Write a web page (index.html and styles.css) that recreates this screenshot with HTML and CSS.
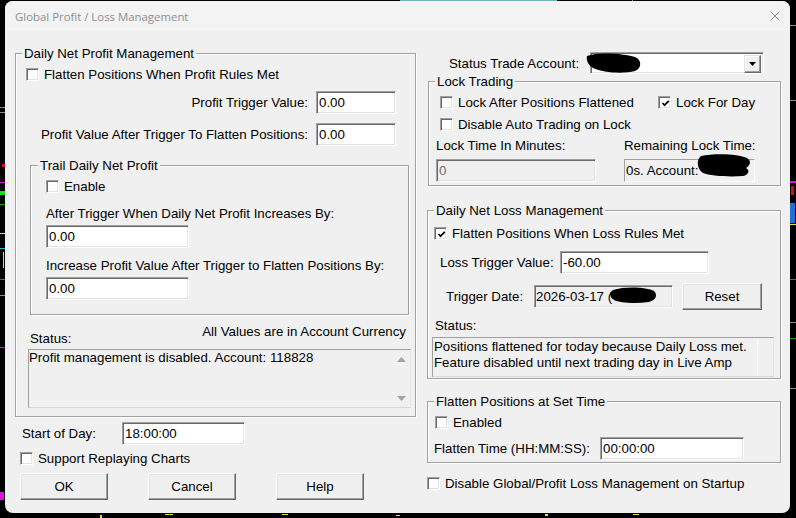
FILE: index.html
```html
<!DOCTYPE html>
<html>
<head>
<meta charset="utf-8">
<link rel="stylesheet" href="styles.css">
</head>
<body>
<div class="chart">
  <span class="c-gray" style="left:0;top:107px;width:5px;height:1px"></span>
  <span class="c-gray" style="left:0;top:112px;width:5px;height:1px"></span>
  <span class="c-red" style="left:2px;top:164px;width:3px;height:3px"></span>
  <span class="c-mag" style="left:0;top:182px;width:5px;height:1px"></span>
  <span class="c-green" style="left:0;top:191px;width:5px;height:4px"></span>
  <span class="c-dgreen" style="left:0;top:204px;width:5px;height:1px"></span>
  <span class="c-yellow" style="left:0;top:233px;width:5px;height:1px"></span>
  <span class="c-cyan" style="left:0;top:248px;width:5px;height:1px"></span>
  <span class="c-yellow" style="left:3px;top:252px;width:1px;height:16px"></span>
  <span class="c-dgreen" style="left:0;top:279px;width:5px;height:1px"></span>
  <span class="c-gray" style="left:0;top:295px;width:5px;height:1px"></span>
  <span class="c-dgreen" style="left:0;top:347px;width:5px;height:1px"></span>
  <span class="c-mag" style="left:0;top:492px;width:4px;height:8px"></span>
  <span class="c-gray" style="left:790px;top:25px;width:6px;height:1px"></span>
  <span class="c-gray" style="left:790px;top:100px;width:6px;height:1px"></span>
  <span class="c-mag" style="left:790px;top:181px;width:6px;height:2px"></span>
  <span class="c-red" style="left:791px;top:186px;width:3px;height:9px"></span>
  <span class="c-blue" style="left:790px;top:203px;width:5px;height:20px"></span>
  <span class="c-yellow" style="left:790px;top:224px;width:6px;height:1px"></span>
  <span class="c-dgreen" style="left:790px;top:279px;width:6px;height:1px"></span>
  <span class="c-gray" style="left:790px;top:322px;width:6px;height:1px"></span>
  <span class="c-dgreen" style="left:790px;top:338px;width:6px;height:1px"></span>
  <span class="c-gray" style="left:790px;top:388px;width:6px;height:1px"></span>
  <span class="c-teal" style="left:400px;top:0;width:157px;height:1px"></span>
  <span class="c-gray" style="left:632px;top:0;width:1px;height:1px"></span>
  <span class="c-yellow" style="left:100px;top:515px;width:2px;height:3px"></span>
  <span class="c-yellow" style="left:165px;top:514px;width:8px;height:1px"></span>
  <span class="c-yellow" style="left:282px;top:514px;width:6px;height:1px"></span>
  <span class="c-yellow" style="left:396px;top:515px;width:4px;height:1px"></span>
  <span class="c-yellow" style="left:545px;top:514px;width:3px;height:2px"></span>
  <span class="c-yellow" style="left:633px;top:514px;width:6px;height:1px"></span>
</div>

<div class="window">
  <div class="titlebar">
    <span class="title">Global Profit / Loss Management</span>
    <svg class="close" width="10" height="10" viewBox="0 0 10 10"><path d="M0.5 0.5 L9.5 9.5 M9.5 0.5 L0.5 9.5" stroke="#8a8a8a" stroke-width="1" fill="none"/></svg>
  </div>

  <div class="body">
    <!-- LEFT COLUMN -->
    <div class="col col-left">
      <fieldset class="group g-profit">
        <legend>Daily Net Profit Management</legend>
        <label class="check"><span class="cb"></span>Flatten Positions When Profit Rules Met</label>
        <div class="frow">
          <span class="flabel">Profit Trigger Value:</span>
          <span class="input w80">0.00</span>
        </div>
        <div class="frow">
          <span class="flabel">Profit Value After Trigger To Flatten Positions:</span>
          <span class="input w80">0.00</span>
        </div>

        <fieldset class="group g-trail">
          <legend>Trail Daily Net Profit</legend>
          <label class="check"><span class="cb"></span>Enable</label>
          <div class="tlabel">After Trigger When Daily Net Profit Increases By:</div>
          <div class="input w143 tinput">0.00</div>
          <div class="tlabel t2">Increase Profit Value After Trigger to Flatten Positions By:</div>
          <div class="input w143 tinput">0.00</div>
        </fieldset>

        <div class="status-head">
          <span class="st-label">Status:</span>
          <span class="st-note">All Values are in Account Currency</span>
        </div>
        <div class="statusbox sb-profit">
          <div class="sb-text">Profit management is disabled. Account: 118828</div>
          <div class="vscroll">
            <svg width="9" height="5" viewBox="0 0 9 5"><path d="M4.5 0 L9 5 L0 5 Z" fill="#a3a3a3"/></svg>
            <svg width="9" height="5" viewBox="0 0 9 5"><path d="M0 0 L9 0 L4.5 5 Z" fill="#a3a3a3"/></svg>
          </div>
        </div>
      </fieldset>

      <div class="sod">
        <span class="sod-label">Start of Day:</span>
        <span class="input w123">18:00:00</span>
      </div>
      <label class="check replay"><span class="cb"></span>Support Replaying Charts</label>
      <div class="buttons">
        <span class="btn">OK</span>
        <span class="btn">Cancel</span>
        <span class="btn">Help</span>
      </div>
    </div>

    <!-- RIGHT COLUMN -->
    <div class="col col-right">
      <div class="acct">
        <span class="acct-label">Status Trade Account:</span>
        <span class="combo">
          <span class="combo-btn"><svg width="7" height="4" viewBox="0 0 7 4"><path d="M0 0 L7 0 L3.5 4 Z" fill="#000"/></svg></span>
          <svg class="blot" width="1" height="1"><path d="M-2 3 C8 -1 33 0 46 4 C53 7 53 15 46 18 C35 21 14 20 4 15 C-1 12 -3 7 -2 3 Z" fill="#000"/></svg>
        </span>
      </div>

      <fieldset class="group g-lock">
        <legend>Lock Trading</legend>
        <div class="lrow">
          <label class="check lock-a"><span class="cb"></span>Lock After Positions Flattened</label>
          <label class="check"><span class="cb checked"><svg width="9" height="9" viewBox="0 0 9 9"><path d="M1.5 4 L3.5 6.2 L7.8 1.8" stroke="#000" stroke-width="1.7" fill="none"/></svg></span>Lock For Day</label>
        </div>
        <label class="check lrow2"><span class="cb"></span>Disable Auto Trading on Lock</label>
        <div class="llabels">
          <span class="ll1">Lock Time In Minutes:</span>
          <span>Remaining Lock Time:</span>
        </div>
        <div class="linputs">
          <span class="input disabled w160">0</span>
          <span class="rembox">0s. Account:
            <svg class="blot" width="1" height="1"><path d="M76 -4 C90 -7 114 -6 122 -2 C127 1 125 6 121 8 C125 10 124 15 118 16 C104 17 85 16 78 13 C72 9 71 0 76 -4 Z" fill="#000"/></svg>
          </span>
        </div>
      </fieldset>

      <fieldset class="group g-loss">
        <legend>Daily Net Loss Management</legend>
        <label class="check"><span class="cb checked"><svg width="9" height="9" viewBox="0 0 9 9"><path d="M1.5 4 L3.5 6.2 L7.8 1.8" stroke="#000" stroke-width="1.7" fill="none"/></svg></span>Flatten Positions When Loss Rules Met</label>
        <div class="losrow">
          <span class="los-label">Loss Trigger Value:</span>
          <span class="input w149">-60.00</span>
        </div>
        <div class="daterow">
          <span class="date-label">Trigger Date:</span>
          <span class="input ro w139">2026-03-17 (
            <svg class="blot" width="1" height="1"><path d="M78 4 C90 0 112 1 119 5 C123 9 121 14 114 16 C100 18 85 17 79 14 C74 11 74 6 78 4 Z" fill="#000"/></svg>
          </span>
          <span class="btn reset">Reset</span>
        </div>
        <div class="loss-st">Status:</div>
        <div class="statusbox sb-loss">
          <div class="sb-text">Positions flattened for today because Daily Loss met.<br>Feature disabled until next trading day in Live Amp</div>
          <div class="vline"></div>
        </div>
      </fieldset>

      <fieldset class="group g-flat">
        <legend>Flatten Positions at Set Time</legend>
        <label class="check"><span class="cb"></span>Enabled</label>
        <div class="flatrow">
          <span class="flat-label">Flatten Time (HH:MM:SS):</span>
          <span class="input w144">00:00:00</span>
        </div>
      </fieldset>

      <label class="check disable-row"><span class="cb"></span>Disable Global/Profit Loss Management on Startup</label>
    </div>
  </div>
</div>
</body>
</html>
```

FILE: styles.css
```css
* { box-sizing: border-box; }
html, body { margin: 0; padding: 0; }
body {
  width: 796px;
  height: 518px;
  background: #000;
  overflow: hidden;
  position: relative;
  font-family: "Liberation Sans", Arial, sans-serif;
  font-size: 13.3px;
  line-height: 15px;
  color: #000;
}

/* background chart fragments */
.chart { position: absolute; left: 0; top: 0; width: 796px; height: 518px; }
.chart span { position: absolute; display: block; }
.c-gray { background: #8a8a8a; }
.c-red { background: #d01010; }
.c-mag { background: #e010e0; }
.c-green { background: #10e010; }
.c-dgreen { background: #0a9a0a; }
.c-yellow { background: #e8e020; }
.c-cyan { background: #30b0d0; }
.c-blue { background: #1f6fd8; }
.c-teal { background: #6fb5b5; }

/* window */
.window {
  position: relative;
  margin: 1px 0 0 5px;
  width: 785px;
  height: 512px;
  background: #f0f0f0;
  border-radius: 8px;
  overflow: hidden;
}
.titlebar {
  height: 30px;
  background: #f3f3f3;
  display: flex;
  align-items: center;
  justify-content: space-between;
  padding: 0 10px;
}
.title {
  font-family: "Open Sans", "Noto Sans", sans-serif;
  font-size: 11.4px;
  color: #8e8e8e;
}
.close { display: block; }

.body {
  display: grid;
  grid-template-columns: 401px 354px;
  column-gap: 11px;
  padding-left: 10px;
  align-items: start;
}
.col { display: flex; flex-direction: column; align-items: flex-start; }

/* group boxes */
.group {
  margin: 0;
  min-width: 0;
  border: 1px solid #a0a0a0;
  box-shadow: inset 1px 1px 0 #fff, 1px 1px 0 #fff;
}
.group > legend {
  padding: 0 2px;
  line-height: 15px;
  background: #f0f0f0;
}

/* checkbox */
.check {
  display: flex;
  align-items: center;
  height: 15px;
  white-space: nowrap;
}
.cb {
  flex: none;
  width: 13px;
  height: 13px;
  margin-right: 5px;
  background: #fff;
  border: 1px solid;
  border-color: #a0a0a0 #fff #fff #a0a0a0;
  box-shadow: inset 1px 1px 0 #696969, inset -1px -1px 0 #e3e3e3;
  display: flex;
  align-items: center;
  justify-content: center;
}
.cb svg { display: block; margin: 1px 0 0 1px; }

/* text fields */
.input {
  flex: none;
  display: flex;
  align-items: center;
  height: 23px;
  padding: 0 0 0 2px;
  background: #fff;
  border: 1px solid;
  border-color: #a0a0a0 #fff #fff #a0a0a0;
  box-shadow: inset 1px 1px 0 #696969, inset -1px -1px 0 #e3e3e3;
  white-space: nowrap;
  overflow: visible;
  position: relative;
}
.input.disabled { background: #f0f0f0; color: #6d6d6d; }
.input.ro { background: #f0f0f0; }
.w80 { width: 80px; }
.w123 { width: 123px; }
.w139 { width: 139px; }
.w143 { width: 143px; }
.w144 { width: 144px; }
.w149 { width: 149px; }
.w160 { width: 160px; }

/* buttons */
.btn {
  flex: none;
  width: 88px;
  height: 27px;
  display: flex;
  align-items: center;
  justify-content: center;
  background: #f0f0f0;
  border: 1px solid;
  border-color: #fff #696969 #696969 #fff;
  box-shadow: inset -1px -1px 0 #a0a0a0, inset 1px 1px 0 #e3e3e3;
}

.blot { position: absolute; left: 0; top: 0; overflow: visible; }

/* ---------- left column ---------- */
.g-profit {
  width: 401px;
  margin-top: 15px;
  padding: 6px 6px 8px 10px;
}
.g-profit > legend { margin-left: -4px; }
.frow {
  display: flex;
  justify-content: flex-end;
  align-items: center;
  margin-top: 9px;
  padding-right: 13px;
}
.flabel { margin-right: 8px; white-space: nowrap; }

.g-trail {
  margin: 12px 0 0 4px;
  padding: 6px 10px 14px 15px;
}
.g-trail > legend { margin-left: -8px; }
.tlabel { margin-top: 12px; white-space: nowrap; }
.tlabel.t2 { margin-top: 10px; }
.tinput { margin-top: 4px; }

.status-head {
  display: flex;
  justify-content: space-between;
  align-items: flex-start;
  height: 22px;
  margin: 9px 3px 0 4px;
}
.st-label { padding-top: 7px; }

.statusbox {
  position: relative;
  display: flex;
  background: #f0f0f0;
  border: 1px solid;
  border-color: #a0a0a0 #e3e3e3 #d8d8d8 #a0a0a0;
  line-height: 16px;
}
.sb-profit {
  height: 59px;
  margin: 3px -2px 0 2px;
}
.sb-text { flex: 1; white-space: nowrap; overflow: hidden; }
.vscroll {
  flex: none;
  width: 17px;
  display: flex;
  flex-direction: column;
  justify-content: space-between;
  align-items: center;
  padding: 7px 0 6px;
}
.vscroll svg { display: block; }

.sod {
  display: flex;
  align-items: center;
  margin: 5px 0 0 7px;
}
.sod-label { width: 100px; }
.replay { margin: 6px 0 0 5px; }
.buttons {
  display: flex;
  gap: 40px;
  margin: 7px 0 0 5px;
}

/* ---------- right column ---------- */
.acct {
  display: flex;
  align-items: center;
  width: 354px;
  margin-top: 21px;
}
.acct-label { margin-left: 22px; white-space: nowrap; }
.combo {
  position: relative;
  margin-left: auto;
  margin-right: 17px;
  width: 174px;
  height: 22px;
  background: #fff;
  border: 1px solid;
  border-color: #a0a0a0 #fff #fff #a0a0a0;
  box-shadow: inset 1px 1px 0 #696969, inset -1px -1px 0 #e3e3e3;
  display: flex;
  justify-content: flex-end;
  padding: 1px;
}
.combo-btn {
  width: 17px;
  height: 18px;
  margin: 1px 1px 0 0;
  display: flex;
  align-items: center;
  justify-content: center;
  background: #f0f0f0;
  border: 1px solid;
  border-color: #e3e3e3 #696969 #696969 #e3e3e3;
  box-shadow: inset -1px -1px 0 #a0a0a0, inset 1px 1px 0 #fff;
}
.combo-btn svg { display: block; }
.combo .blot { left: -2px; top: 0; }

.g-lock {
  width: 353px;
  margin: 0 0 0 1px;
  padding: 6px 8px 3px 11px;
}
.g-lock > legend { margin-left: -5px; }
.lrow { display: flex; }
.lock-a { width: 218px; }
.lrow2 { margin-top: 7px; }
.llabels {
  display: flex;
  margin: 6px 0 0 -4px;
}
.ll1 { width: 188px; }
.linputs {
  display: flex;
  margin: 6px 0 0 -4px;
}
.linputs .disabled { margin-right: 28px; }
.rembox {
  position: relative;
  width: 131px;
  height: 23px;
  display: flex;
  align-items: center;
  padding-left: 1px;
  border: 1px solid;
  border-color: #a0a0a0 #fff #fff #a0a0a0;
  white-space: nowrap;
}

.g-loss {
  width: 354px;
  margin-top: 17px;
  padding: 8px 6px 1px 6px;
}
.g-loss > legend { margin-left: 0; }
.losrow {
  display: flex;
  align-items: center;
  margin: 10px 0 0 6px;
}
.los-label { width: 120px; }
.daterow {
  display: flex;
  align-items: center;
  margin: 9px 0 0 12px;
}
.date-label { width: 88px; }
.daterow .input { padding-left: 1px; }
.reset { width: 80px; margin-left: 9px; }
.loss-st { margin: 8px 0 0 1px; }
.sb-loss {
  height: 40px;
  width: 342px;
  margin: 4px 0 0 -2px;
  padding-top: 1px;
  padding-left: 1px;
}
.vline {
  flex: none;
  width: 16px;
  border-left: 1px solid #fbfbfb;
}

.g-flat {
  width: 354px;
  margin-top: 15px;
  padding: 6px 6px 2px 7px;
}
.g-flat > legend { margin-left: -1px; }
.flatrow {
  display: flex;
  align-items: center;
  margin: 7px 0 0 -1px;
}
.flat-label { width: 166px; white-space: nowrap; }

.disable-row { margin-top: 13px; }
.disable-row .cb { margin-right: 5px; }
```
